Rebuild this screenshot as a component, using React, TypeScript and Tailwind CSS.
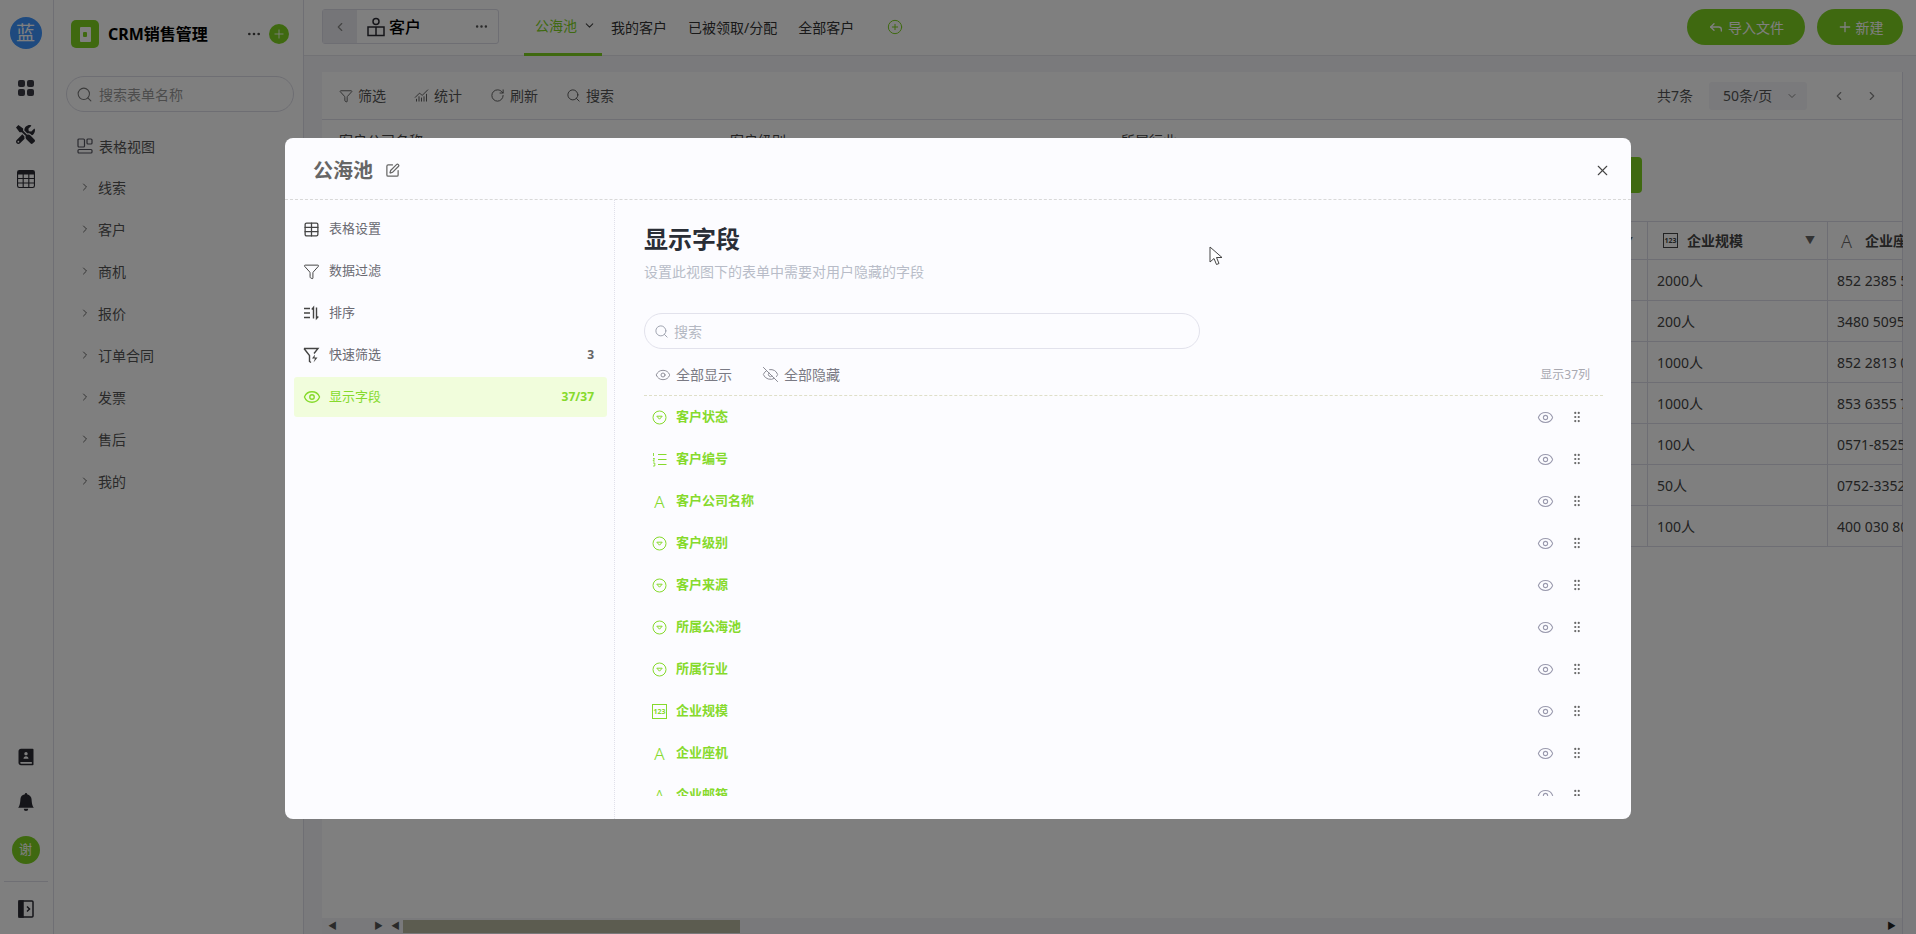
import { ChartNoAxesCombined, ChevronDown, ChevronLeft, ChevronRight, CirclePlus, Eye, EyeOff, Filter, GripVertical, MoreHorizontal, Plus, Reply, RotateCw, Search, SquarePen, Table, X } from 'lucide-react'
import { BsBellFill, BsTable } from 'react-icons/bs'
import { FaTools } from 'react-icons/fa'
import { RiContactsBook2Fill } from 'react-icons/ri'

const groups = ['线索', '客户', '商机', '报价', '订单合同', '发票', '售后', '我的']

const rows = [
  ['2000人', '852 2385 5'],
  ['200人', '3480 5095'],
  ['1000人', '852 2813 0'],
  ['1000人', '853 6355 7'],
  ['100人', '0571-8525'],
  ['50人', '0752-3352'],
  ['100人', '400 030 80'],
]

type FieldKind = 'select' | 'number' | 'text' | 'count'

const fields: { name: string; kind: FieldKind }[] = [
  { name: '客户状态', kind: 'select' },
  { name: '客户编号', kind: 'number' },
  { name: '客户公司名称', kind: 'text' },
  { name: '客户级别', kind: 'select' },
  { name: '客户来源', kind: 'select' },
  { name: '所属公海池', kind: 'select' },
  { name: '所属行业', kind: 'select' },
  { name: '企业规模', kind: 'count' },
  { name: '企业座机', kind: 'text' },
  { name: '企业邮箱', kind: 'text' },
]

function GridIcon() {
  return (
    <svg width="18" height="18" viewBox="0 0 18 18" fill="#3a3a44">
      <rect x="1" y="1" width="7" height="7" rx="2" />
      <rect x="10" y="1" width="7" height="7" rx="2" />
      <rect x="1" y="10" width="7" height="7" rx="2" />
      <rect x="10" y="10" width="7" height="7" rx="2" />
    </svg>
  )
}

function PanelIcon() {
  return (
    <svg width="16" height="18" viewBox="0 0 16 18" fill="none" stroke="#2b2b33" strokeWidth="1.5">
      <rect x="1" y="1" width="14" height="16" rx="1" />
      <rect x="1" y="1" width="4" height="16" fill="#2b2b33" />
      <path d="M9 6.5l2.5 2.5L9 11.5" />
    </svg>
  )
}

function ViewsIcon() {
  return (
    <svg width="16" height="16" viewBox="0 0 16 16" fill="none" stroke="#55555f" strokeWidth="1.2">
      <rect x="1" y="1" width="6.5" height="8" rx="1" />
      <rect x="10" y="1" width="5" height="5" rx="1" />
      <rect x="1" y="11.5" width="14" height="3.5" rx="1" />
    </svg>
  )
}

function CustomerIcon() {
  return (
    <svg width="20" height="20" viewBox="0 0 20 20" fill="none" stroke="#2b2b33" strokeWidth="1.5">
      <circle cx="10" cy="4.5" r="3" />
      <path d="M2 10h16v8.5H2zM10 10v8.5" />
    </svg>
  )
}

function SortIcon() {
  return (
    <svg width="17" height="16" viewBox="0 0 17 16" fill="none" stroke="#444" strokeWidth="1.4">
      <path d="M1 3.5h6M1 8h6M1 12.5h6" />
      <path d="M10.5 13.5V2.5L8.8 4.5M13.5 2.5v11l1.8-2" />
    </svg>
  )
}

function QuickFilterIcon() {
  return (
    <svg width="17" height="17" viewBox="0 0 17 17" fill="none" stroke="#444" strokeWidth="1.4">
      <path d="M1 1.5h14l-4 5M1 1.5l5.5 7v6l1.5 1" />
      <path d="M12 7.5l-3 4h3l-1.5 4 4-5h-3z" fill="#444" stroke="none" />
    </svg>
  )
}

function SelectIcon({ color }: { color: string }) {
  return (
    <svg width="15" height="15" viewBox="0 0 15 15" fill="none" stroke={color} strokeWidth="1">
      <circle cx="7.5" cy="7.5" r="6.5" />
      <path d="M4.8 6.2h5.4L7.5 9.2z" />
    </svg>
  )
}

function NumberListIcon({ color }: { color: string }) {
  return (
    <svg width="15" height="15" viewBox="0 0 15 15" fill="none" stroke={color} strokeWidth="1.1">
      <path d="M6 2.5h8.5M6 7.5h8.5M6 12.5h8.5" />
      <path d="M1.5 1v3M1 6.5h1.6L1 9h1.8M1 11h1.8v3H1" strokeWidth="0.9" />
    </svg>
  )
}

function CountBadge({ color }: { color: string }) {
  return (
    <span
      className="flex h-[15px] w-[15px] items-center justify-center border text-[7px] leading-none font-bold"
      style={{ borderColor: color, color }}
    >
      123
    </span>
  )
}

function FieldIcon({ kind }: { kind: FieldKind }) {
  const green = '#86da2c'
  if (kind === 'select') return <SelectIcon color={green} />
  if (kind === 'number') return <NumberListIcon color={green} />
  if (kind === 'count') return <CountBadge color={green} />
  return <span className="flex w-[15px] justify-center text-[17px] leading-none font-light text-[#86da2c]">A</span>
}

function Rail() {
  return (
    <aside className="flex w-[54px] shrink-0 flex-col items-center border-r border-[#dfdfe8] bg-white pr-[2px]">
      <div className="mt-[17px] flex h-[32px] w-[32px] items-center justify-center rounded-full bg-[#3c94ff] text-[19px] text-white">
        蓝
      </div>
      <div className="mt-[30px]">
        <GridIcon />
      </div>
      <FaTools className="mt-[28px] text-[#2b2b33]" size={19} />
      <BsTable className="mt-[26px] text-[#2b2b33]" size={18} />
      <RiContactsBook2Fill className="mt-auto text-[#2b2b33]" size={20} />
      <BsBellFill className="mt-[26px] text-[#2b2b33]" size={18} />
      <div className="mt-[25px] flex h-[28px] w-[28px] items-center justify-center rounded-full bg-[#7ed321] text-[13px] text-white">
        谢
      </div>
      <div className="mt-[17px] h-px w-[44px] bg-[#dfdfe8]" />
      <div className="mt-[18px] mb-[16px]">
        <PanelIcon />
      </div>
    </aside>
  )
}

function Sidebar() {
  return (
    <aside className="flex w-[250px] shrink-0 flex-col border-r border-[#dfdfe8] bg-white">
      <div className="mt-[20px] flex h-[28px] items-center pl-[17px]">
        <div className="flex h-[28px] w-[28px] items-center justify-center rounded-[5px] bg-[#7ed321]">
          <div className="flex h-[15px] w-[11px] items-center justify-center rounded-[1px] bg-white">
            <div className="h-[5px] w-[4px] rounded-[1px] bg-[#7ed321]" />
          </div>
        </div>
        <span className="ml-[9px] text-[16px] font-bold text-black">CRM销售管理</span>
        <MoreHorizontal className="ml-[38px] text-[#444]" size={16} />
        <div className="ml-[7px] flex h-[20px] w-[20px] items-center justify-center rounded-full bg-[#7ed321]">
          <Plus className="text-white" size={14} strokeWidth={1.5} />
        </div>
      </div>
      <div className="mt-[28px] mr-[9px] ml-[12px] flex h-[36px] items-center rounded-full border border-[#dcdce6] pl-[9px]">
        <Search className="text-[#777]" size={17} strokeWidth={1.5} />
        <span className="ml-[6px] text-[14px] text-[#999]">搜索表单名称</span>
      </div>
      <div className="mt-[23px] flex h-[22px] items-center pl-[23px] text-[14px] text-[#555]">
        <ViewsIcon />
        <span className="ml-[6px]">表格视图</span>
      </div>
      <ul className="mt-[9px]">
        {groups.map((g) => (
          <li key={g} className="flex h-[42px] items-center pl-[25px] text-[14px] text-[#555]">
            <ChevronRight className="text-[#666]" size={12} />
            <span className="ml-[7px]">{g}</span>
          </li>
        ))}
      </ul>
    </aside>
  )
}

function TopBar() {
  return (
    <header className="flex h-[56px] shrink-0 border-b border-[#e4e4ea] bg-white">
      <div className="mt-[9px] ml-[18px] flex h-[35px] w-[177px] items-center rounded-[3px] border border-[#dcdce6]">
        <div className="flex h-full w-[34px] items-center justify-center bg-[#ebebf0]">
          <ChevronLeft className="text-[#888]" size={14} />
        </div>
        <span className="ml-[9px]">
          <CustomerIcon />
        </span>
        <span className="ml-[3px] text-[16px] font-medium text-black">客户</span>
        <MoreHorizontal className="ml-auto mr-[9px] text-[#555]" size={15} />
      </div>
      <nav className="ml-[25px] flex text-[14px] text-[#333]">
        <div className="flex h-[56px] w-[78px] items-center border-b-[3px] border-[#7ed321] pb-[3px] pl-[11px] text-[#7ed321]">
          公海池
          <ChevronDown className="ml-[6px] text-[#444]" size={13} />
        </div>
        <span className="mt-[17px] ml-[9px]">我的客户</span>
        <span className="mt-[17px] ml-[21px]">已被领取/分配</span>
        <span className="mt-[17px] ml-[21px]">全部客户</span>
        <CirclePlus className="mt-[19px] ml-[33px] text-[#7ed321]" size={16} strokeWidth={1.5} />
      </nav>
      <div className="mt-[9px] ml-auto mr-[13px] flex gap-[12px] text-[14px] text-white">
        <button className="flex h-[36px] w-[118px] items-center justify-center gap-[4px] rounded-full bg-[#7ed321]">
          <Reply size={16} />
          导入文件
        </button>
        <button className="flex h-[36px] w-[86px] items-center justify-center gap-[3px] rounded-full bg-[#7ed321]">
          <Plus size={16} />
          新建
        </button>
      </div>
    </header>
  )
}

function Toolbar() {
  const cls = 'flex items-center gap-[5px]'
  return (
    <div className="flex h-[48px] shrink-0 items-center border-b border-[#dfdfe8] pl-[17px] text-[14px] text-[#555]">
      <div className="flex gap-[28px]">
        <span className={cls}>
          <Filter size={14} strokeWidth={1.5} />
          筛选
        </span>
        <span className={cls}>
          <ChartNoAxesCombined size={15} strokeWidth={1.5} />
          统计
        </span>
        <span className={cls}>
          <RotateCw size={15} strokeWidth={1.5} />
          刷新
        </span>
        <span className={cls}>
          <Search size={15} strokeWidth={1.5} />
          搜索
        </span>
      </div>
      <div className="ml-auto flex items-center pr-[23px]">
        <span>共7条</span>
        <div className="ml-[16px] flex h-[28px] w-[98px] items-center rounded-[3px] bg-[#f4f4f8] pl-[14px]">
          50条/页
          <ChevronDown className="ml-[14px] text-[#888]" size={12} />
        </div>
        <ChevronLeft className="ml-[25px] text-[#888]" size={14} />
        <ChevronRight className="ml-[19px] text-[#888]" size={14} />
      </div>
    </div>
  )
}

function Scrollbar() {
  return (
    <div className="flex h-[16px] shrink-0 items-center bg-[#f2f2f6] text-[#555]">
      <span className="ml-[6px] text-[9px]">◀</span>
      <span className="ml-[37px] text-[9px]">▶</span>
      <span className="ml-[8px] text-[9px]">◀</span>
      <div className="ml-[3px] h-[13px] w-[337px] bg-[#b8b8a0]" />
      <span className="ml-auto mr-[6px] text-[9px] text-[#222]">▶</span>
    </div>
  )
}

function DataTable() {
  const gridCols = 'grid grid-cols-[1144px_181px_181px_181px]'
  return (
    <div className="w-[1581px] overflow-hidden border-t border-[#dcdce8] text-[14px] text-[#444]">
      <div className={`${gridCols} h-[37px] items-center font-bold`}>
        <span />
        <span className="flex justify-end pr-[14px] text-[9px] text-[#666]">▼</span>
        <span className="flex h-full items-center border-x border-[#dcdce8] pl-[15px]">
          <CountBadge color="#444" />
          <span className="ml-[9px]">企业规模</span>
          <span className="ml-auto mr-[12px] text-[10px] text-[#666]">▼</span>
        </span>
        <span className="flex h-full items-center pl-[13px]">
          <span className="text-[18px] leading-none font-light text-[#666]">A</span>
          <span className="ml-[13px]">企业座机</span>
        </span>
      </div>
      {rows.map((row, i) => (
        <div key={i} className={`${gridCols} h-[41px] items-center border-t border-[#dcdce8]`}>
          <span />
          <span />
          <span className="flex h-full items-center border-x border-[#dcdce8] pl-[9px]">{row[0]}</span>
          <span className="pl-[9px]">{row[1]}</span>
        </div>
      ))}
      <div className="border-t border-[#dcdce8]" />
    </div>
  )
}

function Main() {
  return (
    <main className="flex min-w-0 flex-1 flex-col bg-[#f4f5f8]">
      <TopBar />
      <div className="mt-[16px] mr-[13px] ml-[18px] flex min-h-0 flex-1 flex-col border-r border-[#dcdce8] bg-white">
        <Toolbar />
        <div className="h-[101px] shrink-0 text-[14px] text-[#444]">
          <div className="grid grid-cols-[391px_391px_391px] pt-[11px] pl-[17px] leading-[20px]">
            <span>客户公司名称</span>
            <span>客户级别</span>
            <span>所属行业</span>
          </div>
          <div className="mt-[6px] mr-[260px] ml-auto h-[36px] w-[80px] rounded-[4px] bg-[#7ed321]" />
        </div>
        <DataTable />
        <div className="flex-1" />
        <Scrollbar />
      </div>
    </main>
  )
}

function ViewModal() {
  const menuCls = 'flex h-[42px] items-center pl-[9px] pr-[13px] text-[13px] text-[#6a6a72]'
  return (
    <div className="mt-[138px] ml-[285px] flex h-[681px] w-[1346px] flex-col rounded-[8px] bg-[#fcfcff]">
      <div className="flex h-[62px] shrink-0 items-center border-b border-dashed border-[#d9d9d9] pt-[4px] pr-[20px] pl-[28px]">
        <span className="text-[20px] font-bold text-[#666]">公海池</span>
        <SquarePen className="ml-[12px] text-[#666]" size={15} strokeWidth={2} />
        <X className="ml-auto text-[#444]" size={17} strokeWidth={1.5} />
      </div>
      <div className="flex min-h-0 flex-1">
        <div className="w-[330px] shrink-0 border-r border-dotted border-[#e0e0ea] pt-[8px] pr-[7px] pl-[9px]">
          <div className={menuCls}>
            <Table className="text-[#444]" size={17} strokeWidth={1.8} />
            <span className="ml-[9px]">表格设置</span>
          </div>
          <div className={menuCls}>
            <Filter className="text-[#444]" size={17} strokeWidth={1.4} />
            <span className="ml-[9px]">数据过滤</span>
          </div>
          <div className={menuCls}>
            <SortIcon />
            <span className="ml-[9px]">排序</span>
          </div>
          <div className={menuCls}>
            <QuickFilterIcon />
            <span className="ml-[9px]">快速筛选</span>
            <span className="ml-auto text-[12px] font-bold text-[#666]">3</span>
          </div>
          <div className="mt-[1px] flex h-[40px] items-center rounded-[3px] bg-[#f1fddc] pr-[13px] pl-[9px] text-[13px] text-[#86da2c]">
            <Eye size={18} strokeWidth={1.8} />
            <span className="ml-[8px]">显示字段</span>
            <span className="ml-auto text-[12px] font-bold">37/37</span>
          </div>
        </div>
        <div className="flex min-w-0 flex-1 flex-col pr-[28px] pl-[29px]">
          <h2 className="mt-[23px] text-[24px] leading-[32px] font-bold text-[#2a2e36]">显示字段</h2>
          <p className="mt-[7px] text-[14px] leading-[20px] text-[#b8bcc8]">设置此视图下的表单中需要对用户隐藏的字段</p>
          <div className="mt-[31px] flex h-[36px] w-[556px] shrink-0 items-center rounded-full border border-[#e2e2ec] pl-[9px]">
            <Search className="text-[#a0a4b0]" size={15} strokeWidth={1.6} />
            <span className="ml-[5px] text-[14px] text-[#b4b8c2]">搜索</span>
          </div>
          <div className="flex h-[47px] shrink-0 items-center border-b border-dashed border-[#dfdfc8] pt-[5px] pr-[13px] pl-[11px] text-[14px] text-[#7a7a84]">
            <Eye className="text-[#8a8a94]" size={16} strokeWidth={1.4} />
            <span className="ml-[5px]">全部显示</span>
            <EyeOff className="ml-[30px] text-[#8a8a94]" size={17} strokeWidth={1.4} />
            <span className="ml-[5px]">全部隐藏</span>
            <span className="ml-auto text-[12px] text-[#a8a8b0]">显示37列</span>
          </div>
          <ul className="min-h-0 flex-1 overflow-hidden">
            {fields.map((f) => (
              <li key={f.name} className="flex h-[42px] items-center pr-[19px] pl-[8px]">
                <FieldIcon kind={f.kind} />
                <span className="ml-[9px] text-[13px] font-bold text-[#86da2c]">{f.name}</span>
                <Eye className="ml-auto text-[#9a9aae]" size={17} strokeWidth={1.5} />
                <GripVertical className="ml-[16px] text-[#666]" size={14} strokeWidth={1.8} />
              </li>
            ))}
          </ul>
          <div className="h-[23px] shrink-0" />
        </div>
      </div>
    </div>
  )
}

export default function App() {
  return (
    <div className="relative flex h-[934px] w-[1916px] overflow-hidden bg-white [font-family:'Noto_Sans','Noto_Sans_CJK_SC',sans-serif]">
      <Rail />
      <Sidebar />
      <Main />
      <div className="absolute inset-0 bg-black/50">
        <ViewModal />
        {/* mouse cursor caught in the capture */}
        <svg className="absolute top-[246px] left-[1209px]" width="14" height="20" viewBox="0 0 14 20" fill="#fff" stroke="#444" strokeWidth="1">
          <path d="M1 1v15l4-3.5 2.5 6 2.5-1-2.5-6h5.5z" />
        </svg>
      </div>
    </div>
  )
}
